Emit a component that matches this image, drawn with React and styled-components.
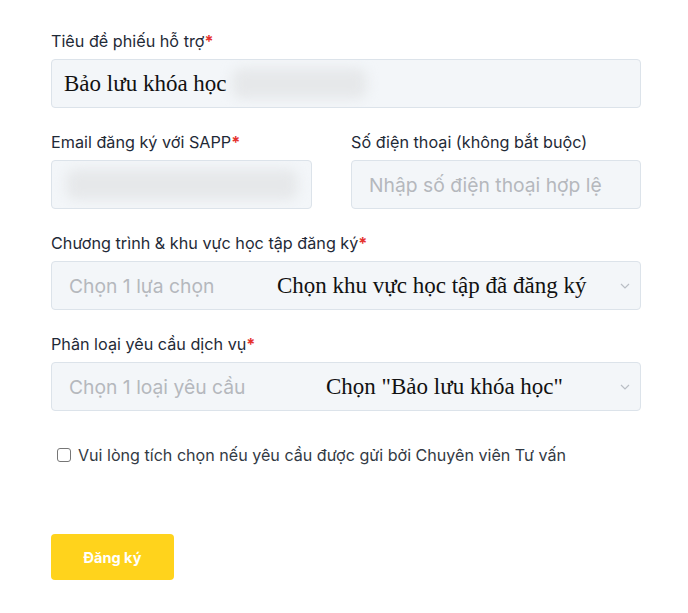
import React from "react";
import styled, { createGlobalStyle } from "styled-components";

const Global = createGlobalStyle`
  html, body { margin: 0; padding: 0; background: #ffffff; }
  body { font-family: Inter, "Noto Sans", sans-serif; }
  * { box-sizing: border-box; }
`;

const Form = styled.form`
  width: 590px;
  margin: 31px 0 0 51px;
  display: flex;
  flex-direction: column;
`;

const Field = styled.div`
  display: flex;
  flex-direction: column;
  margin-bottom: 24px;
  min-width: 0;
`;

const Row = styled.div`
  display: grid;
  grid-template-columns: 261px 290px;
  column-gap: 39px;
`;

const Label = styled.label`
  font-size: 16.2px;
  line-height: 20px;
  color: #1f2a37;
  margin-bottom: 8px;
  white-space: nowrap;
`;

const Star = styled.span`
  color: #e5322d;
  font-weight: 700;
`;

const Box = styled.div`
  position: relative;
  height: 49px;
  background: #f3f6f9;
  border: 1px solid #dce3ea;
  border-radius: 4px;
  display: flex;
  align-items: center;
  padding: 0 17px;
  overflow: hidden;
`;

const Placeholder = styled.span`
  font-size: 19.3px;
  color: #b5b8bd;
  white-space: nowrap;
`;

const Annotation = styled.span`
  position: absolute;
  top: 50%;
  left: ${(p) => p.$left}px;
  transform: translateY(-50%);
  font-family: "Liberation Serif", "Times New Roman", serif;
  font-size: 23px;
  color: #111;
  white-space: nowrap;
`;

const Value = styled.span`
  position: relative;
  z-index: 1;
  font-family: "Liberation Serif", "Times New Roman", serif;
  font-size: 23px;
  color: #111;
  margin-left: -5px;
  white-space: nowrap;
`;

const Blur = styled.div`
  position: absolute;
  left: ${(p) => p.$left}px;
  width: ${(p) => p.$width}px;
  top: 8px;
  bottom: 8px;
  background: #e6e8ea;
  border-radius: 10px;
  filter: blur(6px);
`;

const Chevron = styled.svg`
  position: absolute;
  right: 10px;
  top: 50%;
  margin-top: -3px;
  width: 10px;
  height: 6px;
`;

const CheckRow = styled.label`
  display: flex;
  align-items: center;
  gap: 7px;
  margin: 10px 0 0 6px;
  font-size: 16.1px;
  color: #333a44;
`;

const CheckBox = styled.span`
  width: 14px;
  height: 14px;
  border: 1.5px solid #767676;
  border-radius: 3px;
  background: #fff;
  flex: none;
`;

const Submit = styled.button`
  margin-top: 69px;
  width: 123px;
  height: 46px;
  border: none;
  border-radius: 4px;
  background: #ffd31c;
  color: #ffffff;
  font-family: Inter, sans-serif;
  font-weight: 700;
  font-size: 14.5px;
  cursor: pointer;
`;

const Arrow = () => (
  <Chevron viewBox="0 0 10 6">
    <path d="M1 1l4 4 4-4" fill="none" stroke="#b9bec5" strokeWidth="1.2" />
  </Chevron>
);

export default function App() {
  return (
    <>
      <Global />
      <Form>
        <Field>
          <Label>
            Tiêu đề phiếu hỗ trợ<Star>*</Star>
          </Label>
          <Box>
            <Blur $left={180} $width={135} />
            <Value>Bảo lưu khóa học</Value>
          </Box>
        </Field>
        <Row>
          <Field>
            <Label>
              Email đăng ký với SAPP<Star>*</Star>
            </Label>
            <Box>
              <Blur $left={14} $width={232} />
            </Box>
          </Field>
          <Field>
            <Label>Số điện thoại (không bắt buộc)</Label>
            <Box>
              <Placeholder>Nhập số điện thoại hợp lệ</Placeholder>
            </Box>
          </Field>
        </Row>
        <Field>
          <Label>
            Chương trình &amp; khu vực học tập đăng ký<Star>*</Star>
          </Label>
          <Box>
            <Placeholder>Chọn 1 lựa chọn</Placeholder>
            <Annotation $left={225}>Chọn khu vực học tập đã đăng ký</Annotation>
            <Arrow />
          </Box>
        </Field>
        <Field>
          <Label>
            Phân loại yêu cầu dịch vụ<Star>*</Star>
          </Label>
          <Box>
            <Placeholder>Chọn 1 loại yêu cầu</Placeholder>
            <Annotation $left={274}>Chọn "Bảo lưu khóa học"</Annotation>
            <Arrow />
          </Box>
        </Field>
        <CheckRow>
          <CheckBox />
          Vui lòng tích chọn nếu yêu cầu được gửi bởi Chuyên viên Tư vấn
        </CheckRow>
        <div>
          <Submit type="button">Đăng ký</Submit>
        </div>
      </Form>
    </>
  );
}
